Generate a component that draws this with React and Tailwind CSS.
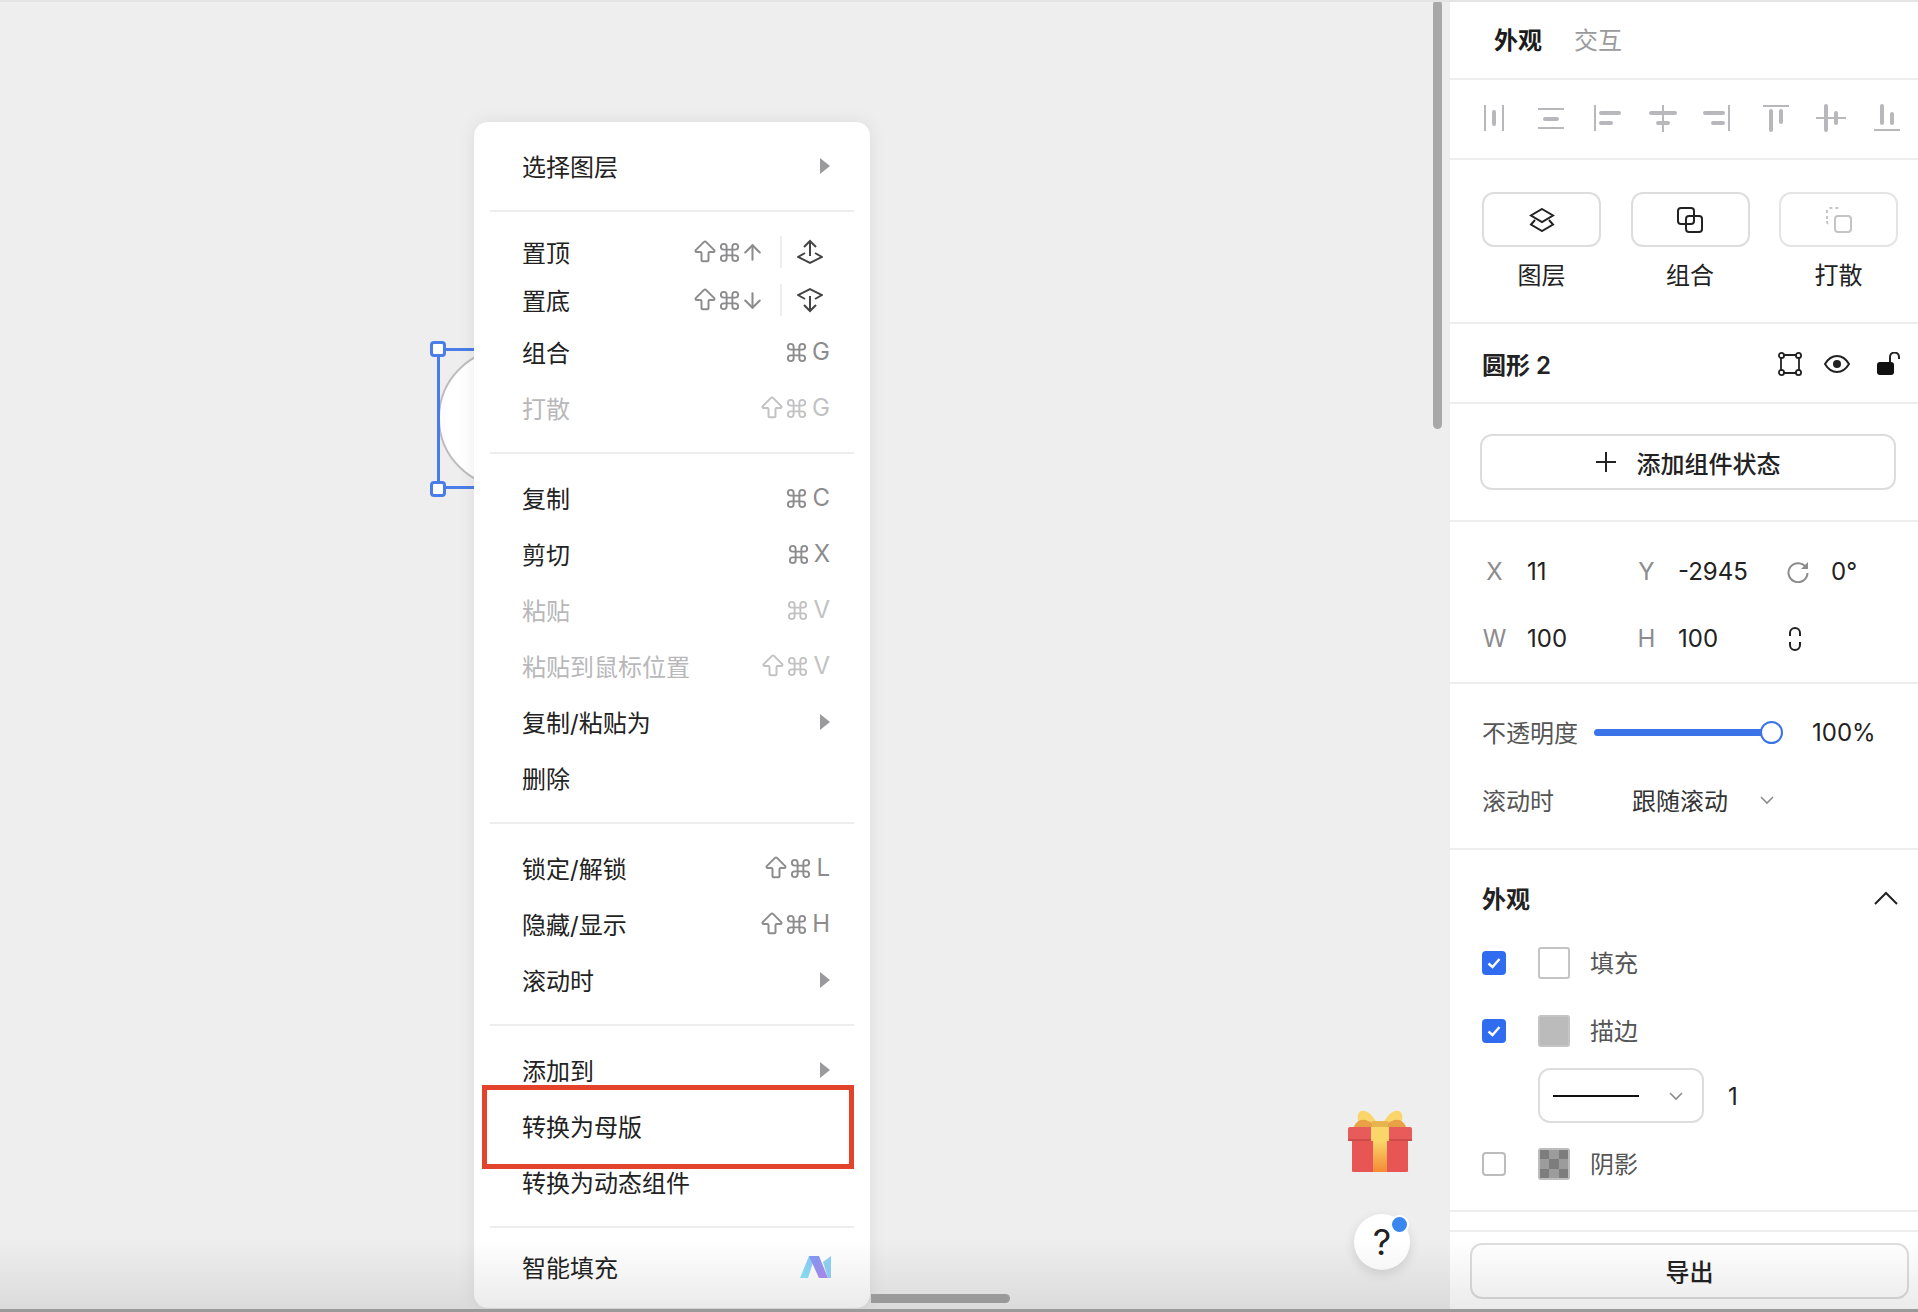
import { ArrowBigUp, ArrowDown, ArrowUp, Command } from 'lucide-react'

function Keys({ keys, disabled }) {
  return (
    <span className={`flex items-center gap-[6px] text-[24px] leading-none ${disabled ? 'text-[#c2c2c4]' : 'text-[#8c8c8e]'}`}>
      {keys.map(k => {
        if (k === 'shift') return <ArrowBigUp key={k} size={28} strokeWidth={1.7} className="-mx-[5px]" />
        if (k === 'cmd') return <Command key={k} size={23} strokeWidth={2} className="-mx-[2px]" />
        if (k === 'up') return <ArrowUp key={k} size={25} strokeWidth={2} className="-mx-[5px]" />
        if (k === 'down') return <ArrowDown key={k} size={25} strokeWidth={2} className="-mx-[5px]" />
        return <span key={k}>{k}</span>
      })}
    </span>
  )
}

function Arrow() {
  return <span className="h-0 w-0 border-y-[8px] border-l-[10px] border-y-transparent border-l-[#9a9a9c]" />
}

function Divider() {
  return <div className="mx-4 my-4 h-[2px] bg-[#eeeeee]" />
}

function StackIcon({ up }) {
  return (
    <svg width="26" height="26" viewBox="0 0 26 26" fill="none" stroke="#444" strokeWidth="2" className={up ? '' : 'rotate-180'}>
      <path d="M13 2v15M7 8l6-6 6 6M8 14l-7 4 12 6 12-6-7-4" />
    </svg>
  )
}

function MenuRow({ label, keys, arrow, disabled, h = 'h-14', children, outline }) {
  return (
    <div className={`relative mx-4 flex items-center justify-between pl-[32px] pr-6 text-[24px] ${h} ${disabled ? 'text-[#b8b8ba]' : 'text-[#222]'}`}>
      <span className="pt-1">{label}</span>
      <span className="flex items-center">
        {keys && <Keys keys={keys} disabled={disabled} />}
        {arrow && <Arrow />}
        {children}
      </span>
      {outline && <span className="absolute -left-2 -right-0 -top-[13px] -bottom-[15px] border-[5px] border-[#e2432a]" />}
    </div>
  )
}

function ContextMenu() {
  return (
    <div className="absolute left-[474px] top-[122px] w-[396px] rounded-[14px] bg-white pb-[13px] pt-4 shadow-[0_0_18px_rgba(0,0,0,0.08)]">
      <MenuRow label="选择图层" arrow />
      <Divider />
      <MenuRow label="置顶" keys={['shift', 'cmd', 'up']} h="h-12">
        <span className="ml-5 h-8 w-[2px] bg-[#eeeeee]" />
        <span className="ml-[15px] mr-[7px]"><StackIcon up /></span>
      </MenuRow>
      <MenuRow label="置底" keys={['shift', 'cmd', 'down']} h="h-12">
        <span className="ml-5 h-8 w-[2px] bg-[#eeeeee]" />
        <span className="ml-[15px] mr-[7px]"><StackIcon /></span>
      </MenuRow>
      <MenuRow label="组合" keys={['cmd', 'G']} />
      <MenuRow label="打散" keys={['shift', 'cmd', 'G']} disabled />
      <Divider />
      <MenuRow label="复制" keys={['cmd', 'C']} />
      <MenuRow label="剪切" keys={['cmd', 'X']} />
      <MenuRow label="粘贴" keys={['cmd', 'V']} disabled />
      <MenuRow label="粘贴到鼠标位置" keys={['shift', 'cmd', 'V']} disabled />
      <MenuRow label="复制/粘贴为" arrow />
      <MenuRow label="删除" />
      <Divider />
      <MenuRow label="锁定/解锁" keys={['shift', 'cmd', 'L']} />
      <MenuRow label="隐藏/显示" keys={['shift', 'cmd', 'H']} />
      <MenuRow label="滚动时" arrow />
      <Divider />
      <MenuRow label="添加到" arrow />
      <MenuRow label="转换为母版" outline />
      <MenuRow label="转换为动态组件" />
      <div className="mx-4 mb-[11px] mt-4 h-[2px] bg-[#eeeeee]" />
      <MenuRow label="智能填充">
        <svg width="32" height="24" viewBox="0 0 32 24" className="-mr-[2px]">
          <defs>
            <linearGradient id="aiA" x1="0" y1="1" x2="1" y2="0">
              <stop offset="0" stopColor="#8be8f7" />
              <stop offset="1" stopColor="#8cc4f8" />
            </linearGradient>
            <linearGradient id="aiB" x1="0" y1="0" x2="1" y2="1">
              <stop offset="0" stopColor="#7f9cf2" />
              <stop offset="1" stopColor="#b48cf3" />
            </linearGradient>
          </defs>
          <polygon points="0,23 9,1 15,1 8,23" fill="url(#aiA)" />
          <polygon points="9,1 19,1 28,23 19,23" fill="url(#aiB)" />
          <polygon points="23,7 31,1 31,23 28,23" fill="#8fd3f6" />
        </svg>
      </MenuRow>
    </div>
  )
}

function Selection() {
  return (
    <>
      <div className="absolute left-[438px] top-[348px] h-[140px] w-[140px] rounded-full border-2 border-[#bdbdbd] bg-white" />
      <div className="absolute left-[437px] top-[348px] h-[141px] w-[60px] border-y-[3px] border-l-[3px] border-[#4a7de8]" />
      <div className="absolute left-[430px] top-[341px] h-4 w-4 rounded-[4px] border-[3px] border-[#4a7de8] bg-white" />
      <div className="absolute left-[430px] top-[481px] h-4 w-4 rounded-[4px] border-[3px] border-[#4a7de8] bg-white" />
    </>
  )
}

function Gift() {
  return (
    <svg width="64" height="62" viewBox="0 0 64 62" className="absolute left-[1348px] top-[1110px]">
      <path d="M31 17C26 6 19-1 13 1 8 3 9 13 14 17Z" fill="#f9d56a" />
      <path d="M33 17C38 6 45-1 51 1 56 3 55 13 50 17Z" fill="#f9d56a" />
      <path d="M6 17c2-6 8-9 14-6 5 2 8 4 11 6Z" fill="#e8a144" />
      <path d="M58 17c-2-6-8-9-14-6-5 2-8 4-11 6Z" fill="#e8a144" />
      <rect x="24" y="11" width="16" height="7" fill="#e8b44f" />
      <rect x="4" y="29" width="56" height="33" rx="1" fill="#e85555" />
      <rect x="0" y="17" width="64" height="14" rx="2" fill="#e85b5b" />
      <rect x="0" y="29" width="64" height="2" fill="#cf4a4a" />
      <defs>
        <linearGradient id="ribbon" x1="0" y1="0" x2="0" y2="1">
          <stop offset="0" stopColor="#f9d56a" />
          <stop offset="1" stopColor="#f58a35" />
        </linearGradient>
      </defs>
      <rect x="23" y="17" width="18" height="14" fill="#f9d56a" />
      <rect x="25" y="31" width="14" height="31" fill="url(#ribbon)" />
    </svg>
  )
}

function HelpButton() {
  return (
    <div className="absolute left-[1354px] top-[1214px] flex h-14 w-14 items-center justify-center rounded-full bg-white text-[36px] text-[#222] shadow-[0_4px_12px_rgba(0,0,0,0.12)]">
      ?
      <span className="absolute right-[1px] top-[1px] box-content h-[15px] w-[15px] rounded-full border-2 border-white bg-[#3a86f0]" />
    </div>
  )
}

// thin guide lines first, then the thick bars
const alignIcons = [
  ['M1 0v26M19 0v26', 'M10 7v12'],
  ['M-2 4h26M-2 23h26', 'M5 14h12'],
  ['M0 0v26', 'M6 8h18M6 18h10'],
  ['M12 0v27', 'M0 8h24M7 18h10'],
  ['M22 0v26', 'M-2 8h18M6 18h10'],
  ['M0 1h26', 'M8 6v19M18 6v11'],
  ['M-2 13h30', 'M8 1v24M18 8v10'],
  ['M0 25h26', 'M8 1v17M18 9v9'],
]

function BigButton({ label, disabled, children }) {
  return (
    <div className="flex w-[119px] flex-col items-center">
      <div className={`flex h-[55px] w-[119px] items-center justify-center rounded-xl border-2 ${disabled ? 'border-[#e4e4e4]' : 'border-[#dddddd]'}`}>
        {children}
      </div>
      <span className="mt-4 text-[24px] leading-[26px] text-[#222]">{label}</span>
    </div>
  )
}

function Field({ label, value, labelW, w }) {
  return (
    <div className={`flex items-center ${w}`}>
      <span className={`text-center text-[#8c8c8e] ${labelW}`}>{label}</span>
      <span className="text-[#222]">{value}</span>
    </div>
  )
}

function CheckBox({ checked }) {
  return checked ? (
    <span className="flex h-6 w-6 items-center justify-center rounded-[4px] bg-[#2f6cf0]">
      <svg width="16" height="16" viewBox="0 0 16 16" fill="none" stroke="#fff" strokeWidth="2.4"><path d="M2.5 8.5l4 3.5 7-8" /></svg>
    </span>
  ) : (
    <span className="h-6 w-6 rounded-[4px] border-2 border-[#bcbcbc]" />
  )
}

function Chevron({ size = 16 }) {
  return (
    <svg width={size} height={size} viewBox="0 0 16 16" fill="none" stroke="#8c8c8e" strokeWidth="1.6"><path d="M2 5l6 6 6-6" /></svg>
  )
}

function SideRow({ checked, label, children }) {
  return (
    <div className="flex h-8 items-center">
      <CheckBox checked={checked} />
      <span className="ml-8 h-8 w-8 shrink-0">{children}</span>
      <span className="ml-[20px] pt-[2px] text-[24px] text-[#555]">{label}</span>
    </div>
  )
}

function Panel() {
  return (
    <div className="flex w-[468px] shrink-0 flex-col bg-white">
      <div className="flex h-[80px] items-center gap-[32px] border-b-2 border-[#eeeeee] pl-[44px] pt-1 text-[24px]">
        <span className="font-bold text-[#1c1c1c]">外观</span>
        <span className="text-[#9a9a9c]">交互</span>
      </div>

      <div className="flex h-[80px] items-center justify-between border-b-2 border-[#eeeeee] pb-[2px] pl-[34px] pr-[18px]">
        {alignIcons.map(([thin, thick], i) => (
          <svg key={i} width="26" height="27" viewBox="0 0 26 27" fill="none" stroke="#b8b8bc" className="overflow-visible">
            <path d={thin} strokeWidth="2" />
            <path d={thick} strokeWidth="4" strokeLinecap="round" />
          </svg>
        ))}
      </div>

      <div className="flex h-[164px] justify-between border-b-2 border-[#eeeeee] pl-[32px] pr-[20px] pt-[32px]">
        <BigButton label="图层">
          <svg width="26" height="24" viewBox="0 0 26 24" fill="none" stroke="#222" strokeWidth="2">
            <path d="M13 1l11 6.500L13 14 2 7.500Z" />
            <path d="M6 12l-4 4.500L13 23l11-6.500-4-4.500" />
          </svg>
        </BigButton>
        <BigButton label="组合">
          <svg width="26" height="26" viewBox="0 0 26 26" fill="none" stroke="#222" strokeWidth="2">
            <rect x="1" y="1" width="16" height="16" rx="3" />
            <rect x="9" y="9" width="16" height="16" rx="3" />
          </svg>
        </BigButton>
        <BigButton label="打散" disabled>
          <svg width="26" height="26" viewBox="0 0 26 26" fill="none" stroke="#c4c4c6" strokeWidth="2">
            <path d="M1 12V4a3 3 0 013-3h10" strokeDasharray="3 3" />
            <path d="M1 14v1a2 2 0 002 2" strokeDasharray="3 3" />
            <rect x="9" y="9" width="16" height="16" rx="3" />
          </svg>
        </BigButton>
      </div>

      <div className="flex h-[80px] items-center justify-between border-b-2 border-[#eeeeee] pl-[32px] pr-[17px]">
        <span className="pt-[6px] text-[24px] font-semibold text-[#222]">圆形 2</span>
        <span className="flex items-center pt-[2px]">
          <svg width="24" height="24" viewBox="0 0 24 24" fill="none" stroke="#222" strokeWidth="1.8">
            <path d="M5 3h14M5 21h14M3 5v14M21 5v14" />
            <circle cx="3.500" cy="3.500" r="2.600" /><circle cx="20.500" cy="3.500" r="2.600" />
            <circle cx="3.500" cy="20.500" r="2.600" /><circle cx="20.500" cy="20.500" r="2.600" />
          </svg>
          <svg width="26" height="18" viewBox="0 0 26 18" fill="none" stroke="#222" strokeWidth="2" className="ml-[22px] mr-[27px]">
            <path d="M1 9c3-5 7-8 12-8s9 3 12 8c-3 5-7 8-12 8S4 14 1 9Z" />
            <circle cx="13" cy="9" r="4" fill="#222" stroke="none" />
          </svg>
          <svg width="24" height="24" viewBox="0 0 24 24">
            <rect x="0" y="10" width="17" height="13" rx="3" fill="#111" />
            <path d="M13 10V5a4.500 4.500 0 019 0v2" fill="none" stroke="#222" strokeWidth="2" />
          </svg>
        </span>
      </div>

      <div className="flex h-[118px] items-start border-b-2 border-[#eeeeee] pl-[30px] pr-[22px] pt-[30px]">
        <div className="flex h-[56px] w-full items-center justify-center rounded-xl border-2 border-[#dddddd] text-[24px] font-medium text-[#222]">
          <svg width="20" height="20" viewBox="0 0 20 20" stroke="#222" strokeWidth="2" className="mr-[21px]"><path d="M10 0v20M0 10h20" /></svg>
          <span className="pt-[5px]">添加组件状态</span>
        </div>
      </div>

      <div className="flex h-[162px] flex-col gap-[35px] border-b-2 border-[#eeeeee] pl-[32px] pt-[34px] text-[24px] leading-8">
        <div className="flex items-center">
          <Field label="X" value="11" labelW="w-[45px] pr-[20px]" w="w-[155px]" />
          <Field label="Y" value="-2945" labelW="w-[41px] pr-[22px]" w="w-[150px]" />
          <svg width="22" height="22" viewBox="0 0 22 22" fill="none" stroke="#8c8c8e" strokeWidth="2" className="mr-[22px]">
            <path d="M19 6.500A9.500 9.500 0 1020.500 12" />
            <path d="M21 1v7h-7Z" fill="#8c8c8e" stroke="none" />
          </svg>
          <span className="text-[#222]">0°</span>
        </div>
        <div className="flex items-center">
          <Field label="W" value="100" labelW="w-[45px] pr-[20px]" w="w-[155px]" />
          <Field label="H" value="100" labelW="w-[41px] pr-[22px]" w="w-[150px]" />
          <svg width="14" height="24" viewBox="0 0 14 24" fill="none" stroke="#222" strokeWidth="2" className="ml-[1px]">
            <path d="M2 9V6a5 5 0 0110 0v3M2 15v3a5 5 0 0010 0v-3" />
          </svg>
        </div>
      </div>

      <div className="flex h-[166px] flex-col border-b-2 border-[#eeeeee] pl-[32px] pt-[30px] text-[24px]">
        <div className="flex h-9 items-center">
          <span className="w-[112px] pt-1 text-[#555]">不透明度</span>
          <div className="relative h-[7px] w-[178px] rounded-full bg-[#3a74e8]">
            <span className="absolute -right-[11px] -top-[8px] h-[23px] w-[23px] rounded-full border-2 border-[#3a74e8] bg-white" />
          </div>
          <span className="ml-10 pt-[2px] text-[#222]">100%</span>
        </div>
        <div className="mt-[32px] flex h-9 items-center">
          <span className="w-[150px] pt-1 text-[#555]">滚动时</span>
          <span className="pt-1 text-[#333]">跟随滚动</span>
          <span className="ml-[31px]"><Chevron /></span>
        </div>
      </div>

      <div className="flex h-[362px] flex-col border-b-2 border-[#eeeeee] pl-[32px] pr-5">
        <div className="flex h-[96px] items-center justify-between">
          <span className="pt-1 text-[24px] font-bold text-[#222]">外观</span>
          <svg width="24" height="14" viewBox="0 0 24 14" fill="none" stroke="#222" strokeWidth="2"><path d="M1 13L12 2l11 11" /></svg>
        </div>
        <div className="mt-[1px] flex flex-col gap-9">
          <SideRow checked label="填充">
            <span className="block h-8 w-8 rounded-[3px] border-2 border-[#c4c4c4] bg-white" />
          </SideRow>
          <SideRow checked label="描边">
            <span className="block h-8 w-8 rounded-[3px] border-2 border-[#c4c4c4] bg-[#bbbbbb]" />
          </SideRow>
        </div>
        <div className="ml-[56px] mt-[21px] flex items-center">
          <div className="flex h-[55px] w-[166px] items-center justify-between rounded-xl border-2 border-[#dddddd] pl-[13px] pr-[18px]">
            <span className="h-[2px] w-[86px] bg-[#111]" />
            <Chevron />
          </div>
          <span className="ml-6 pt-[2px] text-[24px] text-[#222]">1</span>
        </div>
        <div className="mt-[25px]">
          <SideRow label="阴影">
            <span className="grid h-8 w-8 grid-cols-3 grid-rows-3 rounded-[3px] border-2 border-[#bdbdbd]">
              {[0, 1, 0, 1, 0, 1, 0, 1, 0].map((dark, i) => (
                <span key={i} className={dark ? 'bg-[#9c9c9c]' : 'bg-[#7d7d7d]'} />
              ))}
            </span>
          </SideRow>
        </div>
      </div>

      <div className="h-5 border-b-2 border-[#eeeeee]" />

      <div className="pl-5 pr-[9px] pt-[11px]">
        <div className="flex h-[56px] items-center justify-center rounded-xl border-2 border-[#dddddd] text-[24px] font-medium text-[#222]">
          <span className="pt-1">导出</span>
        </div>
      </div>
    </div>
  )
}

export default function App() {
  return (
    <div className="relative flex h-[1312px] w-[1918px] overflow-hidden bg-[#eeeeee] font-['Inter','Noto_Sans_CJK_SC',sans-serif]">
      <div className="relative min-w-0 flex-1">
        <Selection />
        <ContextMenu />
        <div className="absolute left-[1433px] top-0 h-[429px] w-[9px] rounded-full bg-[#a8a8a8]" />
        <div className="absolute left-[871px] top-[1294px] h-[9px] w-[139px] rounded-r-full bg-[#a5a5a5]" />
        <Gift />
        <HelpButton />
      </div>
      <Panel />
      <div className="pointer-events-none absolute inset-x-0 top-0 h-[2px] bg-[#e4e4e4]" />
      <div className="pointer-events-none absolute inset-x-0 bottom-[3px] h-[70px] bg-gradient-to-t from-black/8 to-transparent" />
      <div className="pointer-events-none absolute inset-x-0 bottom-0 h-[3px] bg-[#9a9a9a]" />
    </div>
  )
}
